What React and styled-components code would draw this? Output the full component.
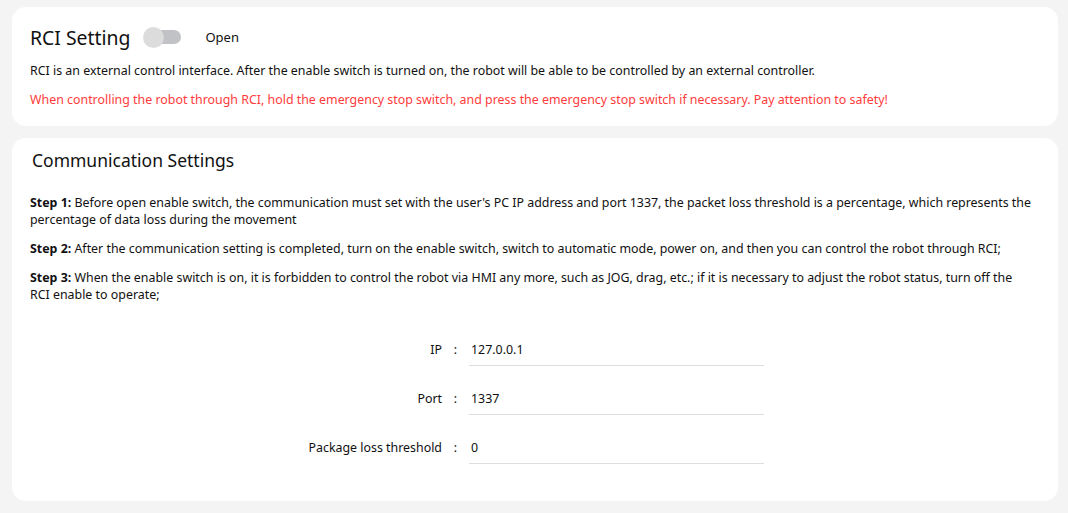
import styled, { createGlobalStyle } from "styled-components";

const Global = createGlobalStyle`
  html, body {
    margin: 0;
    padding: 0;
    background: #f4f4f4;
  }
  body {
    font-family: "Noto Sans", "Open Sans", "Liberation Sans", sans-serif;
    color: #111;
  }
`;

const Page = styled.div`
  width: 1068px;
  height: 513px;
  box-sizing: border-box;
  padding: 7px 10px 12px 12px;
  display: flex;
  flex-direction: column;
  gap: 12px;
`;

const Card = styled.div`
  background: #fff;
  border-radius: 14px;
  box-sizing: border-box;
  padding: ${(p) => p.$pad};
  flex: ${(p) => (p.$grow ? 1 : "none")};
  height: ${(p) => p.$h || "auto"};
`;

const Header = styled.div`
  display: flex;
  align-items: center;
  height: 28px;
`;

const Title = styled.div`
  font-size: 19.4px;
  color: #111;
`;

const Toggle = styled.div`
  position: relative;
  width: 38px;
  height: 21px;
  margin-left: 13px;
  display: flex;
  align-items: center;
`;

const Track = styled.div`
  width: 36px;
  height: 14px;
  margin-left: 2px;
  border-radius: 7px;
  background: #c0c2c6;
`;

const Knob = styled.div`
  position: absolute;
  left: 0;
  top: 0;
  width: 21px;
  height: 21px;
  border-radius: 50%;
  background: #dcdcdc;
`;

const ToggleLabel = styled.span`
  font-size: 13px;
  margin-left: 24px;
`;

const Text = styled.p`
  margin: ${(p) => p.$m || "0"};
  font-size: 12.4px;
  line-height: 17px;
  color: ${(p) => (p.$red ? "#ff3b3b" : "#111")};
`;

const SubTitle = styled.div`
  font-size: 17.5px;
  margin: 0 0 22px 2px;
`;

const Steps = styled.div`
  display: flex;
  flex-direction: column;
  gap: 12px;
  padding-right: 7px;
`;

const Form = styled.div`
  margin-top: 32px;
  display: grid;
  grid-template-columns: 412px 27px 295px;
`;

const Label = styled.div`
  font-size: 12.4px;
  text-align: right;
  height: 49px;
  line-height: 30px;
`;

const Colon = styled.div`
  font-size: 12.4px;
  text-align: center;
  height: 49px;
  line-height: 30px;
`;

const Input = styled.div`
  font-size: 12.4px;
  height: 31px;
  line-height: 30px;
  padding-left: 2px;
  border-bottom: 1px solid #dedede;
  box-sizing: border-box;
`;

const rows = [
  ["IP", "127.0.0.1"],
  ["Port", "1337"],
  ["Package loss threshold", "0"],
];

export default function App() {
  return (
    <>
      <Global />
      <Page>
        <Card $pad="16px 18px 0 18px" $h="119px">
          <Header>
            <Title>RCI Setting</Title>
            <Toggle>
              <Track />
              <Knob />
            </Toggle>
            <ToggleLabel>Open</ToggleLabel>
          </Header>
          <Text $m="11px 0 0 0">
            RCI is an external control interface. After the enable switch is turned on, the robot will be able to be controlled by an external controller.
          </Text>
          <Text $red $m="12px 0 0 0">
            When controlling the robot through RCI, hold the emergency stop switch, and press the emergency stop switch if necessary. Pay attention to safety!
          </Text>
        </Card>
        <Card $pad="10px 18px 0 18px" $grow>
          <SubTitle>Communication Settings</SubTitle>
          <Steps>
            <Text>
              <b>Step 1:</b> Before open enable switch, the communication must set with the user's PC IP address and port 1337, the packet loss threshold is a percentage, which represents the percentage of data loss during the movement
            </Text>
            <Text>
              <b>Step 2:</b> After the communication setting is completed, turn on the enable switch, switch to automatic mode, power on, and then you can control the robot through RCI;
            </Text>
            <Text>
              <b>Step 3:</b> When the enable switch is on, it is forbidden to control the robot via HMI any more, such as JOG, drag, etc.; if it is necessary to adjust the robot status, turn off the RCI enable to operate;
            </Text>
          </Steps>
          <Form>
            {rows.map(([k, v]) => (
              <>
                <Label key={k + "l"}>{k}</Label>
                <Colon key={k + "c"}>:</Colon>
                <Input key={k + "v"}>{v}</Input>
              </>
            ))}
          </Form>
        </Card>
      </Page>
    </>
  );
}
